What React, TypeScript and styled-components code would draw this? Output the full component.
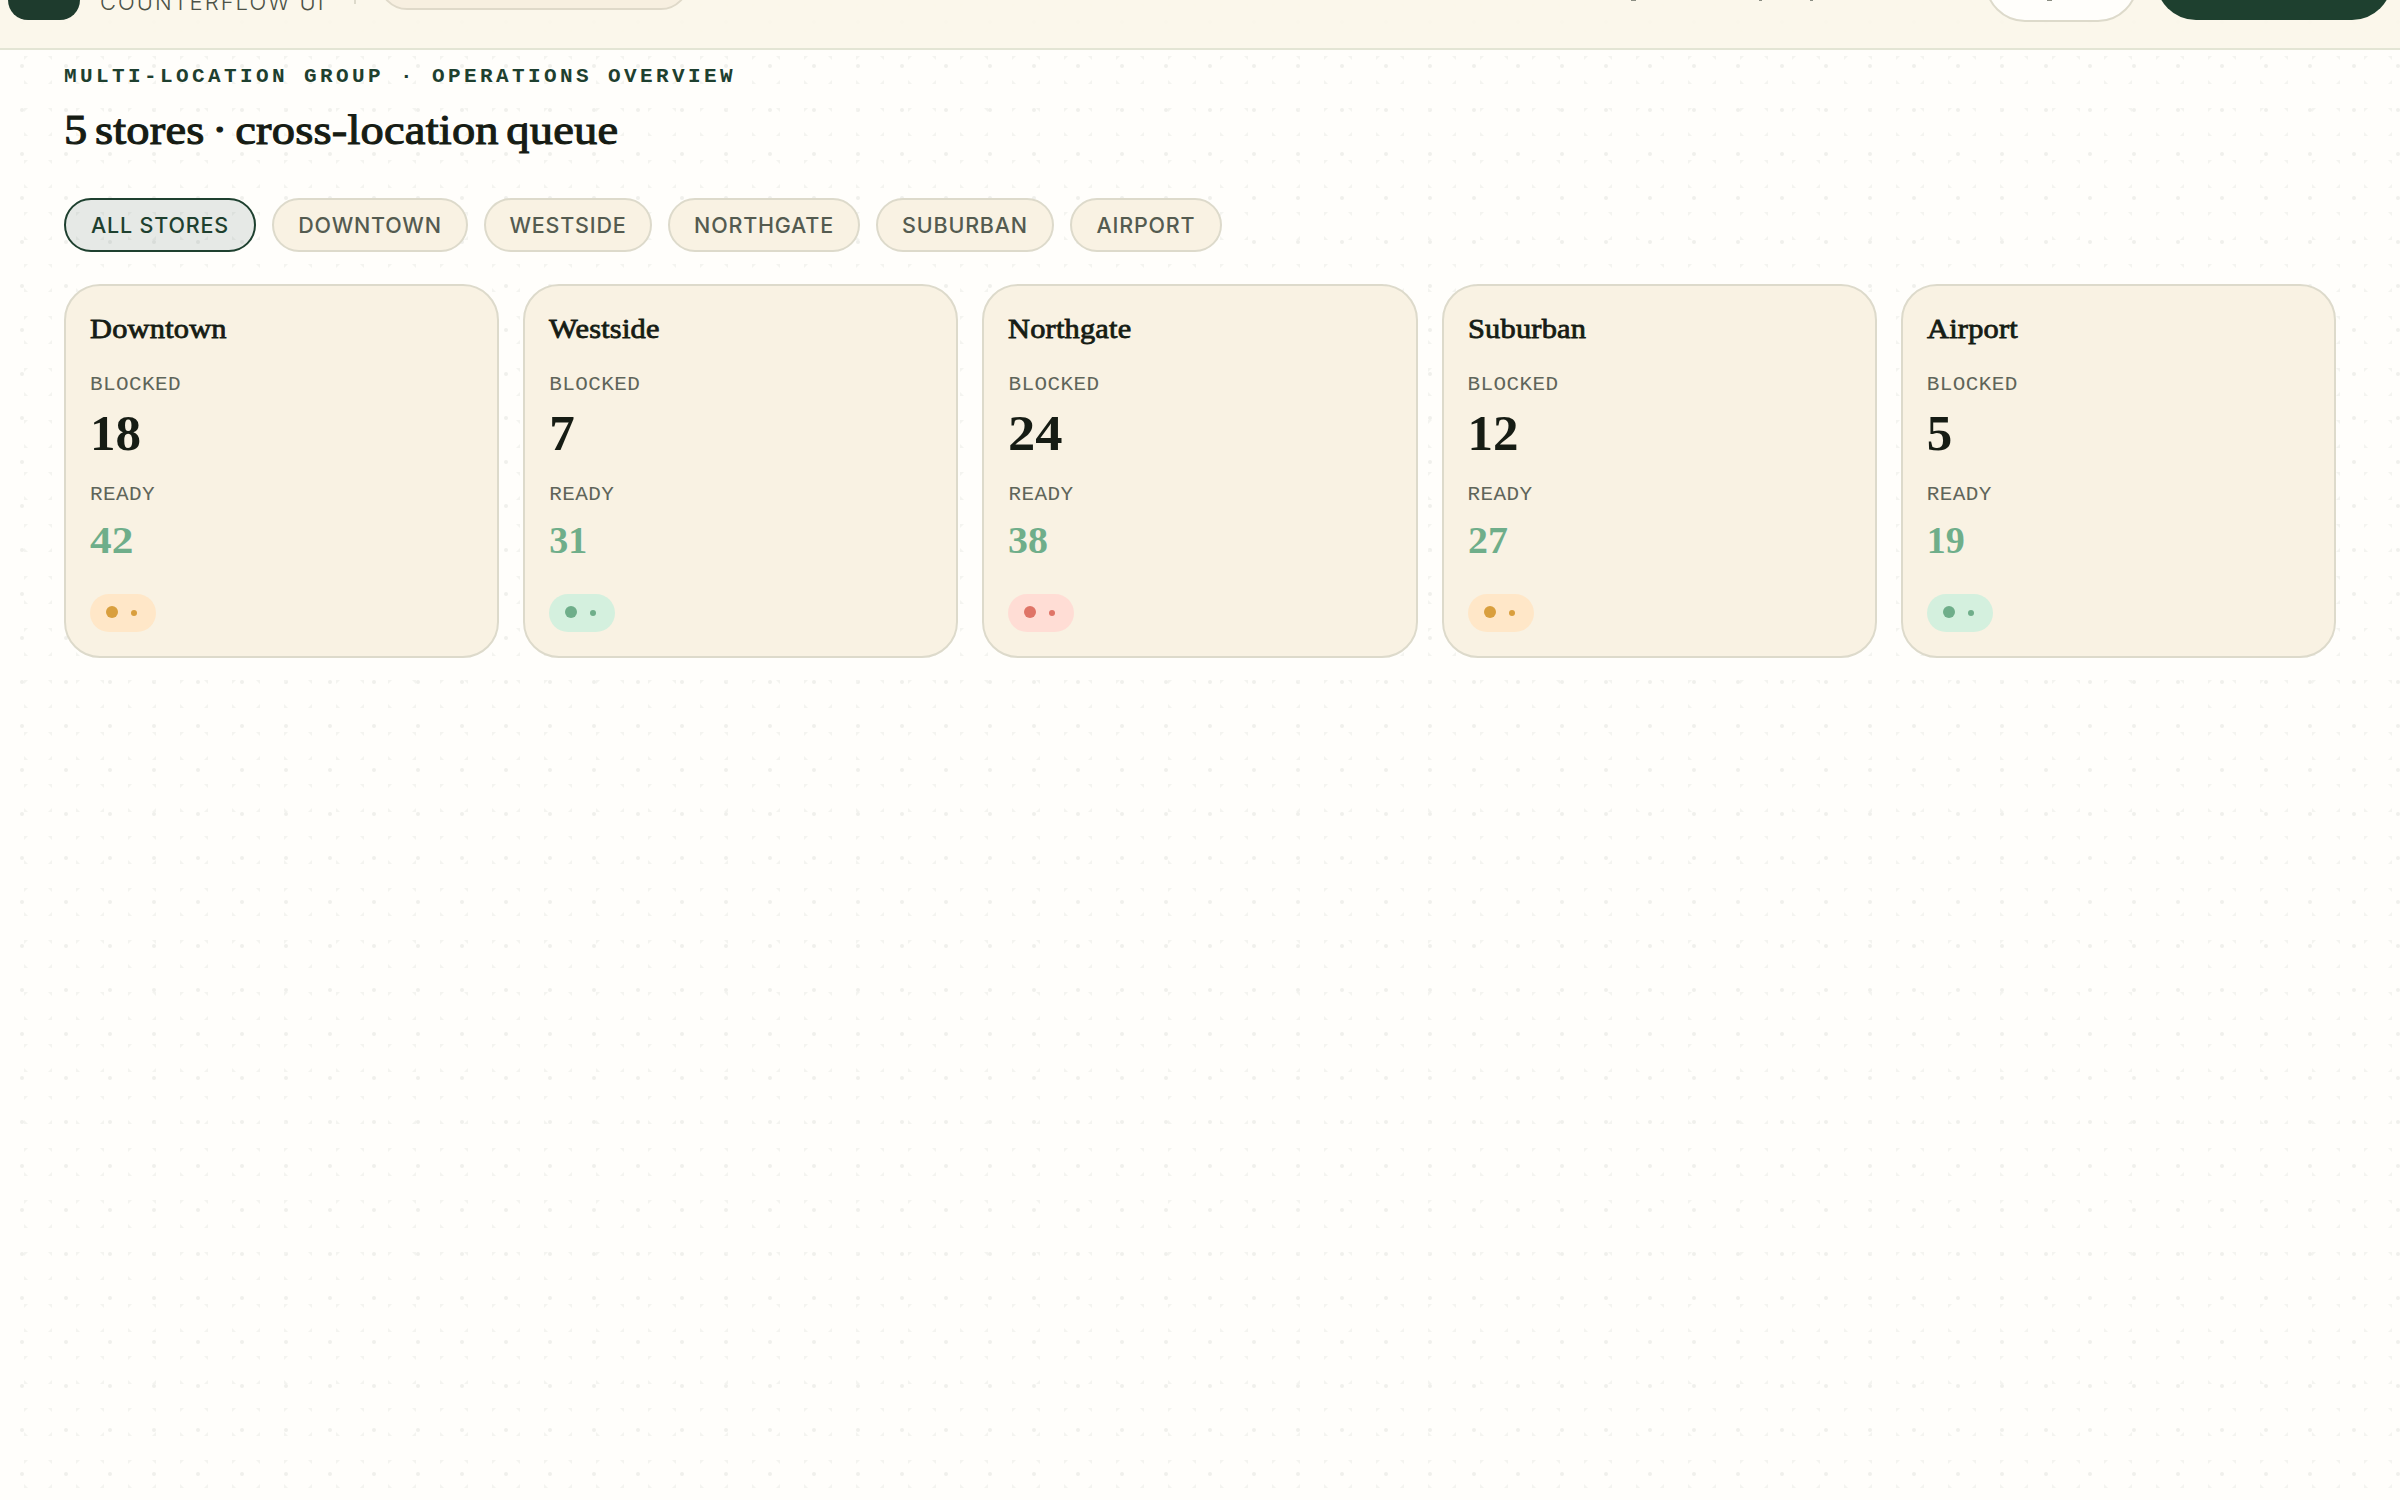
import React from "react";
import styled, { createGlobalStyle } from "styled-components";

const serif = `"Liberation Serif", "Times New Roman", serif`;
const sans = `"Inter", "Noto Sans", sans-serif`;
const mono = `"Liberation Mono", monospace`;

const Global = createGlobalStyle`
  *, *::before, *::after { box-sizing: border-box; }
  html, body { margin: 0; }
  body { background: #fffefb; overflow: hidden; -webkit-font-smoothing: antialiased; }
`;

const Page = styled.div`
  height: 1500px;
  overflow: hidden;
  position: relative;
  color: #161c14;
`;

const Dots = styled.svg`
  position: absolute;
  inset: 0;
  width: 100%;
  height: 100%;
`;

const Shell = styled.div`
  position: relative;
  display: flex;
  flex-direction: column;
`;

const Header = styled.header`
  height: 50px;
  padding: 0 8px;
  display: flex;
  align-items: flex-end;
  background: rgba(251, 246, 233, 0.92);
  border-bottom: 2px solid #e3e5d4;
  overflow: hidden;
`;

const Logo = styled.div`
  width: 72px;
  height: 72px;
  margin-bottom: 28px;
  border-radius: 20px;
  background: #1e3b2d;
`;

const Brand = styled.span`
  width: 232px;
  margin: 0 0 33px 20px;
  font: 300 22px/26px ${sans};
  letter-spacing: 2px;
  color: #4c5247;
  white-space: nowrap;
`;

const Divider = styled.i`
  width: 2px;
  height: 40px;
  margin: 0 23px 44px 22px;
  background: #dddacb;
`;

const Switcher = styled.div`
  width: 310px;
  height: 60px;
  margin-bottom: 38px;
  border: 2px solid #dfd9c9;
  border-radius: 28px;
  background: #f7efe0;
`;

/* Lowest pixel row of the scrolled-away navigation labels */
const Descender = styled.i<{ $gap: number; $w: number }>`
  width: ${(p) => p.$w}px;
  height: 1px;
  margin: 0 0 47px ${(p) => p.$gap}px;
  background: #8b8e83;
`;

const Actions = styled.div`
  margin-left: auto;
  display: flex;
  align-items: flex-end;
  gap: 18px;
`;

const Action = styled.div<{ $primary?: boolean }>`
  width: ${(p) => (p.$primary ? 236 : 153)}px;
  height: 80px;
  display: flex;
  align-items: flex-end;
  margin-bottom: ${(p) => (p.$primary ? 28 : 26)}px;
  border-radius: 40px;
  border: ${(p) => (p.$primary ? "0" : "2px solid #dddacb")};
  background: ${(p) => (p.$primary ? "#1e402f" : "#fffefb")};

  ${Descender} {
    margin-bottom: 19px;
  }
`;

const Main = styled.main`
  padding: 17px 64px 0;
  display: flex;
  flex-direction: column;
`;

const Eyebrow = styled.p`
  margin: 0;
  font: 700 21px/20px ${mono};
  letter-spacing: 3.4px;
  color: #1e402f;
`;

const Title = styled.h1`
  margin: 18px 0 0;
  font: 400 43px/50px ${serif};
  -webkit-text-stroke: 1.1px #161c14;
  letter-spacing: 0.2px;
  word-spacing: -4px;
  transform: scaleX(1.08);
  transform-origin: 0 50%;
`;

const Chips = styled.nav`
  margin-top: 43px;
  display: flex;
  gap: 16px;
`;

const Chip = styled.button<{ $active?: boolean; $w: number }>`
  width: ${(p) => p.$w}px;
  height: 54px;
  padding: 0;
  border: 2px solid ${(p) => (p.$active ? "#1e402f" : "#dddacb")};
  border-radius: 27px;
  background: ${(p) => (p.$active ? "rgba(30, 64, 60, 0.11)" : "#f9f2e3")};
  color: ${(p) => (p.$active ? "#1e402f" : "#545b50")};
  font: 550 21.5px/26px ${sans};
  letter-spacing: 0.8px;
`;

const Grid = styled.section`
  margin-top: 32px;
  display: grid;
  grid-template-columns: repeat(5, 1fr);
  gap: 24px;
`;

const Card = styled.article`
  height: 374px;
  padding: 24px;
  border: 2px solid #dddacb;
  border-radius: 36px;
  background: #f9f2e3;
  display: flex;
  flex-direction: column;
  align-items: flex-start;
`;

const Name = styled.h2`
  margin: 2px 0 0;
  font: 400 28px/34px ${serif};
  -webkit-text-stroke: 0.8px #161c14;
  letter-spacing: 0.2px;
  transform: scaleX(1.085);
  transform-origin: 0 50%;
`;

const Label = styled.span<{ $top: number }>`
  margin-top: ${(p) => p.$top}px;
  font: 400 21px/24px ${mono};
  letter-spacing: 0.4px;
  color: #5f655a;
`;

const Value = styled.span<{ $ready?: boolean; $stretch: number }>`
  margin-top: ${(p) => (p.$ready ? 13 : 8)}px;
  font: 700 ${(p) => (p.$ready ? 38 : 51)}px/${(p) => (p.$ready ? 40 : 56)}px ${serif};
  color: ${(p) => (p.$ready ? "#6fae8a" : "#161c14")};
  transform: scaleX(${(p) => p.$stretch});
  transform-origin: 0 50%;
`;

const tones = {
  amber: ["#ffe7c8", "#d99f3e"],
  green: ["#d4f0de", "#6fae8a"],
  red: ["#ffddd5", "#df7467"],
};
type Tone = keyof typeof tones;

const Pill = styled.div<{ $tone: Tone }>`
  margin-top: auto;
  width: 66px;
  height: 38px;
  padding: 0 19px 0 16px;
  border-radius: 19px;
  display: flex;
  align-items: center;
  justify-content: space-between;
  background: ${(p) => tones[p.$tone][0]};
  color: ${(p) => tones[p.$tone][1]};
`;

const Dot = styled.i<{ $size: number }>`
  width: ${(p) => p.$size}px;
  height: ${(p) => p.$size}px;
  margin-bottom: ${(p) => (p.$size > 6 ? 2 : 0)}px;
  border-radius: 50%;
  background: currentColor;
`;

const chips: [string, number][] = [
  ["ALL STORES", 192],
  ["DOWNTOWN", 196],
  ["WESTSIDE", 168],
  ["NORTHGATE", 192],
  ["SUBURBAN", 178],
  ["AIRPORT", 152],
];

const stores: { name: string; blocked: number; ready: number; tone: Tone }[] = [
  { name: "Downtown", blocked: 18, ready: 42, tone: "amber" },
  { name: "Westside", blocked: 7, ready: 31, tone: "green" },
  { name: "Northgate", blocked: 24, ready: 38, tone: "red" },
  { name: "Suburban", blocked: 12, ready: 27, tone: "amber" },
  { name: "Airport", blocked: 5, ready: 19, tone: "green" },
];

const stretchOf = (n: number) => (n === 42 ? 1.14 : n === 24 ? 1.07 : n === 38 || n === 27 ? 1.05 : 1);

export default function App() {
  return (
    <Page>
      <Global />
      <Dots aria-hidden>
        <defs>
          <pattern id="round" width="44" height="44" patternUnits="userSpaceOnUse">
            <circle cx="22" cy="22" r="2" fill="#f0f0ec" />
          </pattern>
          <pattern id="corner" width="52" height="52" x="24" y="4" patternUnits="userSpaceOnUse">
            <path d="M0 0h4l-4 4zM28 0v4l-4-4zM0 28v-4l4 4zM28 28h-4l4-4z" fill="#f4f4f0" />
          </pattern>
        </defs>
        <rect width="100%" height="100%" fill="url(#round)" />
        <rect width="100%" height="100%" fill="url(#corner)" />
      </Dots>
      <Shell>
        <Header>
          <Logo />
          <Brand>COUNTERFLOW UI</Brand>
          <Divider />
          <Switcher />
          <Descender $gap={942} $w={5} />
          <Descender $gap={123} $w={3} />
          <Descender $gap={48} $w={3} />
          <Actions>
            <Action>
              <Descender $gap={60} $w={5} />
            </Action>
            <Action $primary />
          </Actions>
        </Header>
        <Main>
          <Eyebrow>MULTI-LOCATION GROUP · OPERATIONS OVERVIEW</Eyebrow>
          <Title>5 stores · cross-location queue</Title>
          <Chips>
            {chips.map(([text, w], i) => (
              <Chip key={text} $w={w} $active={i === 0}>{text}</Chip>
            ))}
          </Chips>
          <Grid>
            {stores.map((s) => (
              <Card key={s.name}>
                <Name>{s.name}</Name>
                <Label $top={27}>BLOCKED</Label>
                <Value $stretch={stretchOf(s.blocked)}>{s.blocked}</Value>
                <Label $top={22}>READY</Label>
                <Value $ready $stretch={stretchOf(s.ready)}>{s.ready}</Value>
                <Pill $tone={s.tone}>
                  <Dot $size={12} />
                  <Dot $size={6} />
                </Pill>
              </Card>
            ))}
          </Grid>
        </Main>
      </Shell>
    </Page>
  );
}
